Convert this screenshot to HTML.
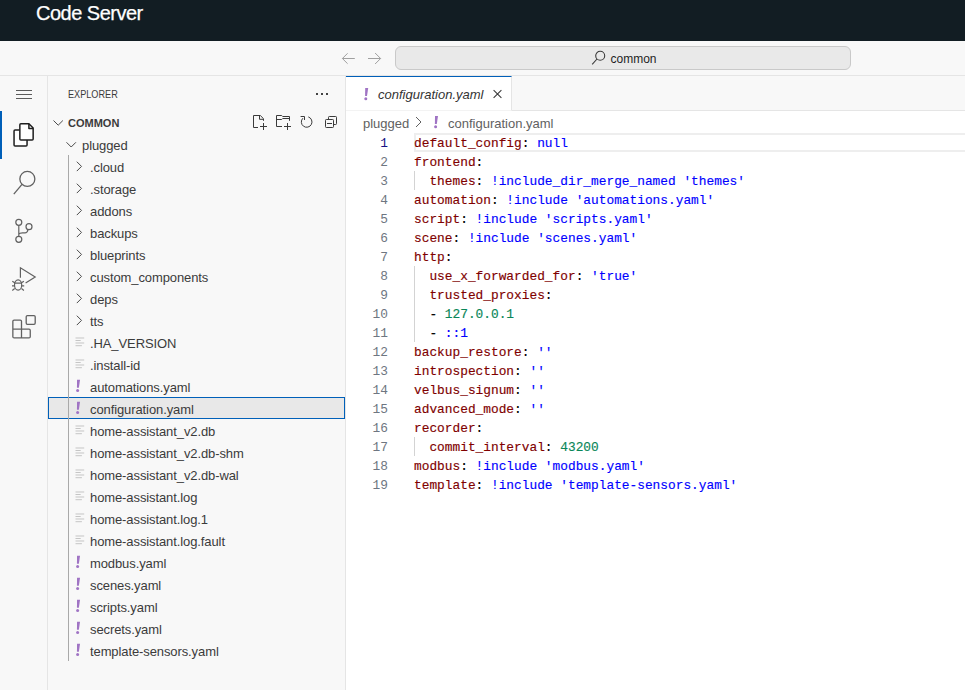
<!DOCTYPE html>
<html><head><meta charset="utf-8">
<style>
*{margin:0;padding:0;box-sizing:border-box}
html,body{width:965px;height:690px;overflow:hidden;background:#ffffff;font-family:"Liberation Sans",sans-serif}
.a{position:absolute}
#hdr{left:0;top:0;width:965px;height:41px;background:#121d23}
#hdr .t{position:absolute;left:36px;top:1px;font-size:20px;letter-spacing:-0.5px;line-height:24px;color:#ffffff;white-space:pre;-webkit-text-stroke:0.25px #ffffff}
#tb{left:0;top:41px;width:965px;height:35px;background:#f8f8f8;border-bottom:1px solid #e5e5e5}
#srch{left:395px;top:46px;width:456px;height:24px;background:#e9e9e9;border:1px solid #c9c9c9;border-radius:6px}
#srch .q{position:absolute;left:214.5px;top:5px;font-size:12px;line-height:14px;color:#1f1f1f}
#act{left:0;top:76px;width:48px;height:614px;background:#f8f8f8;border-right:1px solid #e5e5e5}
#side{left:48px;top:76px;width:298px;height:614px;background:#f8f8f8;border-right:1px solid #e5e5e5}
.row{position:absolute;left:48px;width:297px;height:22px;font-size:13px;line-height:22px;color:#3b3b3b;white-space:pre;letter-spacing:-0.1px}
.row .nm{position:absolute;left:42px;top:0}
.sel{background:#e8e8e8;border:1px solid #0060b9;left:48px;width:297px}
#tabs{left:346px;top:76px;width:619px;height:35px;background:#f8f8f8;border-bottom:1px solid #e5e5e5}
#tab{left:346px;top:76px;width:166px;height:35px;background:#ffffff;border-top:1px solid #005fb8;border-right:1px solid #e5e5e5;border-bottom:1px solid #f3f3f3}
.code{position:absolute;left:414px;font-family:"Liberation Mono",monospace;font-size:13.5px;line-height:19px;height:19px;white-space:pre;color:#800000;transform:scaleX(0.9501);transform-origin:0 0;-webkit-text-stroke:0.15px currentColor}
.ln{position:absolute;left:346px;width:42px;text-align:right;font-family:"Liberation Mono",monospace;font-size:13.5px;line-height:19px;color:#237893;transform:scaleX(0.9501);transform-origin:100% 0}
.k{color:#800000}.s{color:#0000ff}.num{color:#098658}.p{color:#000000}
.bang{position:absolute;color:#a074c4;font-weight:bold;font-style:italic;font-size:15px;line-height:22px}
.ig{position:absolute;width:1px;background:#d3d3d3}
svg{position:absolute;overflow:visible}
</style></head><body>
<div id="hdr" class="a"><div class="t">Code Server</div></div>
<div id="tb" class="a"></div>
<svg style="left:340px;top:50px" width="44" height="16" viewBox="0 0 44 16"><g fill="none" stroke="#a0a0a0" stroke-width="1"><path d="M2.4 8.5H14.8M2.4 8.5L7.6 3.3M2.4 8.5L7.6 13.7"/><path d="M28 8.5H40.6M40.6 8.5L35.1 3M40.6 8.5L35.1 14"/></g></svg>
<div id="srch" class="a"><div class="q">common</div></div>
<svg style="left:591px;top:50px" width="16" height="16" viewBox="0 0 16 16"><g fill="none" stroke="#3b3b3b" stroke-width="1.1"><circle cx="9.2" cy="5.8" r="4.5"/><path d="M6 9L1.2 14.4"/></g></svg>
<div id="act" class="a"></div>
<div class="a" style="left:0;top:111px;width:2px;height:48px;background:#005fb8"></div>
<svg style="left:0;top:0" width="48" height="350" viewBox="0 0 48 350"><g fill="#5c5c5c"><rect x="16" y="90" width="16" height="1"/><rect x="16" y="94" width="16" height="1"/><rect x="16" y="98" width="16" height="1"/></g><g fill="none" stroke="#1f1f1f" stroke-width="1.5" stroke-linejoin="round"><path d="M19.85 130.1 H15.05 Q14.05 130.1 14.05 131.1 V145 Q14.05 146 15.05 146 H26.05 Q27.05 146 27.05 145 V140" fill="#ffffff"/><path d="M19.85 124.75 Q19.85 123.75 20.85 123.75 L28.9 123.75 L33.15 128 L33.15 139.1 Q33.15 140.1 32.15 140.1 L20.85 140.1 Q19.85 140.1 19.85 139.1 Z" fill="#ffffff"/><path d="M28.9 123.75 V128.5 H33.15"/></g><g fill="none" stroke="#616161" stroke-width="1.3"><circle cx="27.35" cy="178.9" r="7.5"/><path d="M22 184.3L13.8 194.2"/></g><g fill="none" stroke="#616161" stroke-width="1.2"><circle cx="18.8" cy="222.3" r="3"/><circle cx="18.8" cy="239.3" r="3"/><circle cx="29" cy="226.7" r="3"/><path d="M18.8 225.3V236.3M18.8 234.2Q19.5 232.9 22.5 232.9H25Q27.3 232.9 28 229.6"/></g><g fill="none" stroke="#616161" stroke-width="1.2" stroke-linejoin="miter"><path d="M20.4 277.8V267.8L35.2 277.1L25.6 283"/><ellipse cx="18.1" cy="285" rx="3.6" ry="5.2"/><path d="M14.5 283.2H21.7M12.3 281.2L14.7 282.8M23.9 281.2L21.5 282.8M12 285.8H14.5M24.2 285.8H21.7M12.3 290.4L14.7 288.6M23.9 290.4L21.5 288.6"/></g><g fill="none" stroke="#616161" stroke-width="1.3"><rect x="26.2" y="315.6" width="9" height="8.7" rx="1.2"/><path d="M21.5 329.2V321.2Q21.5 320.05 20.3 320.05H14.1Q12.85 320.05 12.85 321.2V336.8Q12.85 337.95 14.1 337.95H29Q30.25 337.95 30.25 336.8V330.4Q30.25 329.2 29 329.2H12.85M21.5 329.2V337.95"/></g></svg>
<div id="side" class="a"></div>
<div class="a" style="left:68px;top:84px;font-size:11px;line-height:20px;color:#3b3b3b;transform:scaleX(0.83);transform-origin:0 0;white-space:pre">EXPLORER</div>
<svg style="left:0;top:0" width="346" height="140" viewBox="0 0 346 140"><g fill="#424242"><rect x="316" y="93" width="2" height="2"/><rect x="321" y="93" width="2" height="2"/><rect x="326" y="93" width="2" height="2"/></g><g fill="none" stroke="#3b3b3b" stroke-width="1"><path d="M258 127.5H253.5V115.5H260.3L263.5 118.7V120.8M259.5 115.5V119.3H263.5M260 126.5H267M263.5 123V130"/><path d="M282 126.5H276.5V115.5H281.7L282.7 116.5H289.5V120.8M276.5 119.5H281.7L282.7 118.5H289.5M284 126.5H291M287.5 123V130"/><path d="M308.3 116.9A5.3 5.3 0 1 1 302.9 118.2"/><path d="M300.6 116.5H304.5V120"/><path d="M328.5 119.3V117.3Q328.5 116.5 329.3 116.5H335.7Q336.5 116.5 336.5 117.3V123.7Q336.5 124.5 335.7 124.5H333.7"/><rect x="325.5" y="119.5" width="8" height="8" rx="0.8"/><path d="M327 123.5H332"/></g><path d="M53.5 120.5L58.2 125.2L62.9 120.5" fill="none" stroke="#4a4a4a" stroke-width="1"/></svg>
<div class="a" style="left:68px;top:112px;font-size:11px;line-height:22px;font-weight:bold;color:#3b3b3b;white-space:pre">COMMON</div>
<div class="row" style="top:134px"><div class="nm" style="left:34px;top:1px">plugged</div></div>
<svg style="left:0;top:0" width="10" height="10"><path d="M66.5 142.3L71.2 147L75.9 142.3" fill="none" stroke="#4a4a4a" stroke-width="1"/></svg>
<div class="row" style="top:155px"><div class="nm" style="top:2px;left:42px">.cloud</div></div>
<svg style="left:0;top:0" width="10" height="10"><path d="M76.8 161.7L81.5 166.4L76.8 171.1" fill="none" stroke="#4a4a4a" stroke-width="1"/></svg>
<div class="row" style="top:177px"><div class="nm" style="top:2px;left:42px">.storage</div></div>
<svg style="left:0;top:0" width="10" height="10"><path d="M76.8 183.7L81.5 188.4L76.8 193.1" fill="none" stroke="#4a4a4a" stroke-width="1"/></svg>
<div class="row" style="top:199px"><div class="nm" style="top:2px;left:42px">addons</div></div>
<svg style="left:0;top:0" width="10" height="10"><path d="M76.8 205.7L81.5 210.4L76.8 215.1" fill="none" stroke="#4a4a4a" stroke-width="1"/></svg>
<div class="row" style="top:221px"><div class="nm" style="top:2px;left:42px">backups</div></div>
<svg style="left:0;top:0" width="10" height="10"><path d="M76.8 227.7L81.5 232.4L76.8 237.1" fill="none" stroke="#4a4a4a" stroke-width="1"/></svg>
<div class="row" style="top:243px"><div class="nm" style="top:2px;left:42px">blueprints</div></div>
<svg style="left:0;top:0" width="10" height="10"><path d="M76.8 249.7L81.5 254.4L76.8 259.1" fill="none" stroke="#4a4a4a" stroke-width="1"/></svg>
<div class="row" style="top:265px"><div class="nm" style="top:2px;left:42px">custom_components</div></div>
<svg style="left:0;top:0" width="10" height="10"><path d="M76.8 271.7L81.5 276.4L76.8 281.1" fill="none" stroke="#4a4a4a" stroke-width="1"/></svg>
<div class="row" style="top:287px"><div class="nm" style="top:2px;left:42px">deps</div></div>
<svg style="left:0;top:0" width="10" height="10"><path d="M76.8 293.7L81.5 298.4L76.8 303.1" fill="none" stroke="#4a4a4a" stroke-width="1"/></svg>
<div class="row" style="top:309px"><div class="nm" style="top:2px;left:42px">tts</div></div>
<svg style="left:0;top:0" width="10" height="10"><path d="M76.8 315.7L81.5 320.4L76.8 325.1" fill="none" stroke="#4a4a4a" stroke-width="1"/></svg>
<div class="row" style="top:331px"><div class="nm" style="top:2px;left:42px">.HA_VERSION</div></div>
<svg style="left:0;top:0" width="10" height="10"><g stroke="#c5c5c5" stroke-width="1"><path d="M75.5 338H84.2M75.5 340.5H80.7M75.5 343H84.2M75.5 345.7H81.9"/></g></svg>
<div class="row" style="top:353px"><div class="nm" style="top:2px;left:42px">.install-id</div></div>
<svg style="left:0;top:0" width="10" height="10"><g stroke="#c5c5c5" stroke-width="1"><path d="M75.5 360H84.2M75.5 362.5H80.7M75.5 365H84.2M75.5 367.7H81.9"/></g></svg>
<div class="row" style="top:375px"><div class="nm" style="top:2px;left:42px">automations.yaml</div></div>
<svg style="left:0;top:0" width="1" height="1"><g fill="#a074c4"><path d="M77.05 379.80H80.05L78.85 387.80H76.95Z"/><circle cx="77.65" cy="390.50" r="1.5"/></g></svg>
<div class="row sel" style="top:397px"><div class="nm" style="top:1px;left:41px">configuration.yaml</div></div>
<svg style="left:0;top:0" width="1" height="1"><g fill="#a074c4"><path d="M77.05 401.80H80.05L78.85 409.80H76.95Z"/><circle cx="77.65" cy="412.50" r="1.5"/></g></svg>
<div class="row" style="top:419px"><div class="nm" style="top:2px;left:42px">home-assistant_v2.db</div></div>
<svg style="left:0;top:0" width="10" height="10"><g stroke="#c5c5c5" stroke-width="1"><path d="M75.5 426H84.2M75.5 428.5H80.7M75.5 431H84.2M75.5 433.7H81.9"/></g></svg>
<div class="row" style="top:441px"><div class="nm" style="top:2px;left:42px">home-assistant_v2.db-shm</div></div>
<svg style="left:0;top:0" width="10" height="10"><g stroke="#c5c5c5" stroke-width="1"><path d="M75.5 448H84.2M75.5 450.5H80.7M75.5 453H84.2M75.5 455.7H81.9"/></g></svg>
<div class="row" style="top:463px"><div class="nm" style="top:2px;left:42px">home-assistant_v2.db-wal</div></div>
<svg style="left:0;top:0" width="10" height="10"><g stroke="#c5c5c5" stroke-width="1"><path d="M75.5 470H84.2M75.5 472.5H80.7M75.5 475H84.2M75.5 477.7H81.9"/></g></svg>
<div class="row" style="top:485px"><div class="nm" style="top:2px;left:42px">home-assistant.log</div></div>
<svg style="left:0;top:0" width="10" height="10"><g stroke="#c5c5c5" stroke-width="1"><path d="M75.5 492H84.2M75.5 494.5H80.7M75.5 497H84.2M75.5 499.7H81.9"/></g></svg>
<div class="row" style="top:507px"><div class="nm" style="top:2px;left:42px">home-assistant.log.1</div></div>
<svg style="left:0;top:0" width="10" height="10"><g stroke="#c5c5c5" stroke-width="1"><path d="M75.5 514H84.2M75.5 516.5H80.7M75.5 519H84.2M75.5 521.7H81.9"/></g></svg>
<div class="row" style="top:529px"><div class="nm" style="top:2px;left:42px">home-assistant.log.fault</div></div>
<svg style="left:0;top:0" width="10" height="10"><g stroke="#c5c5c5" stroke-width="1"><path d="M75.5 536H84.2M75.5 538.5H80.7M75.5 541H84.2M75.5 543.7H81.9"/></g></svg>
<div class="row" style="top:551px"><div class="nm" style="top:2px;left:42px">modbus.yaml</div></div>
<svg style="left:0;top:0" width="1" height="1"><g fill="#a074c4"><path d="M77.05 555.80H80.05L78.85 563.80H76.95Z"/><circle cx="77.65" cy="566.50" r="1.5"/></g></svg>
<div class="row" style="top:573px"><div class="nm" style="top:2px;left:42px">scenes.yaml</div></div>
<svg style="left:0;top:0" width="1" height="1"><g fill="#a074c4"><path d="M77.05 577.80H80.05L78.85 585.80H76.95Z"/><circle cx="77.65" cy="588.50" r="1.5"/></g></svg>
<div class="row" style="top:595px"><div class="nm" style="top:2px;left:42px">scripts.yaml</div></div>
<svg style="left:0;top:0" width="1" height="1"><g fill="#a074c4"><path d="M77.05 599.80H80.05L78.85 607.80H76.95Z"/><circle cx="77.65" cy="610.50" r="1.5"/></g></svg>
<div class="row" style="top:617px"><div class="nm" style="top:2px;left:42px">secrets.yaml</div></div>
<svg style="left:0;top:0" width="1" height="1"><g fill="#a074c4"><path d="M77.05 621.80H80.05L78.85 629.80H76.95Z"/><circle cx="77.65" cy="632.50" r="1.5"/></g></svg>
<div class="row" style="top:639px"><div class="nm" style="top:2px;left:42px">template-sensors.yaml</div></div>
<svg style="left:0;top:0" width="1" height="1"><g fill="#a074c4"><path d="M77.05 643.80H80.05L78.85 651.80H76.95Z"/><circle cx="77.65" cy="654.50" r="1.5"/></g></svg>
<div class="a" style="left:68px;top:155px;width:1px;height:506px;background:#a9a9a9"></div>
<div id="tabs" class="a"></div>
<div id="tab" class="a"></div>
<svg style="left:0;top:0" width="1" height="1"><g fill="#a074c4"><path d="M365.20 88.00H368.20L367.00 96.00H365.10Z"/><circle cx="365.80" cy="98.70" r="1.5"/></g></svg>
<div class="a" style="left:378px;top:85px;font-size:13px;line-height:20px;font-style:italic;color:#333333;white-space:pre">configuration.yaml</div>
<svg style="left:0;top:0" width="10" height="10"><path d="M493.6 90.2L501.4 97.8M501.4 90.2L493.6 97.8" fill="none" stroke="#3b3b3b" stroke-width="1.1"/></svg>
<div class="a" style="left:363px;top:114px;font-size:13px;line-height:20px;color:#616161;white-space:pre">plugged</div>
<svg style="left:0;top:0" width="10" height="10"><path d="M416 117L421 122L416 127" fill="none" stroke="#616161" stroke-width="1"/></svg>
<svg style="left:0;top:0" width="1" height="1"><g fill="#a074c4"><path d="M435.00 116.00H438.00L436.80 124.00H434.90Z"/><circle cx="435.60" cy="126.70" r="1.5"/></g></svg>
<div class="a" style="left:448px;top:114px;font-size:13px;line-height:20px;color:#616161;white-space:pre">configuration.yaml</div>
<div class="a" style="left:414px;top:133px;width:551px;height:19px;border:2px solid #eeeeee;border-right:none"></div>
<div class="ln" style="top:134px;color:#171184">1</div>
<div class="code" style="top:134px"><span class="k">default_config</span><span class="p">: </span><span class="s">null</span></div>
<div class="ln" style="top:153px;color:#6e7681">2</div>
<div class="code" style="top:153px"><span class="k">frontend</span><span class="p">:</span></div>
<div class="ln" style="top:172px;color:#6e7681">3</div>
<div class="code" style="top:172px">  <span class="k">themes</span><span class="p">: </span><span class="s">!include_dir_merge_named 'themes'</span></div>
<div class="ln" style="top:191px;color:#6e7681">4</div>
<div class="code" style="top:191px"><span class="k">automation</span><span class="p">: </span><span class="s">!include 'automations.yaml'</span></div>
<div class="ln" style="top:210px;color:#6e7681">5</div>
<div class="code" style="top:210px"><span class="k">script</span><span class="p">: </span><span class="s">!include 'scripts.yaml'</span></div>
<div class="ln" style="top:229px;color:#6e7681">6</div>
<div class="code" style="top:229px"><span class="k">scene</span><span class="p">: </span><span class="s">!include 'scenes.yaml'</span></div>
<div class="ln" style="top:248px;color:#6e7681">7</div>
<div class="code" style="top:248px"><span class="k">http</span><span class="p">:</span></div>
<div class="ln" style="top:267px;color:#6e7681">8</div>
<div class="code" style="top:267px">  <span class="k">use_x_forwarded_for</span><span class="p">: </span><span class="s">'true'</span></div>
<div class="ln" style="top:286px;color:#6e7681">9</div>
<div class="code" style="top:286px">  <span class="k">trusted_proxies</span><span class="p">:</span></div>
<div class="ln" style="top:305px;color:#6e7681">10</div>
<div class="code" style="top:305px">  <span class="p">- </span><span class="num">127.0.0.1</span></div>
<div class="ln" style="top:324px;color:#6e7681">11</div>
<div class="code" style="top:324px">  <span class="p">- </span><span class="s">::1</span></div>
<div class="ln" style="top:343px;color:#6e7681">12</div>
<div class="code" style="top:343px"><span class="k">backup_restore</span><span class="p">: </span><span class="s">''</span></div>
<div class="ln" style="top:362px;color:#6e7681">13</div>
<div class="code" style="top:362px"><span class="k">introspection</span><span class="p">: </span><span class="s">''</span></div>
<div class="ln" style="top:381px;color:#6e7681">14</div>
<div class="code" style="top:381px"><span class="k">velbus_signum</span><span class="p">: </span><span class="s">''</span></div>
<div class="ln" style="top:400px;color:#6e7681">15</div>
<div class="code" style="top:400px"><span class="k">advanced_mode</span><span class="p">: </span><span class="s">''</span></div>
<div class="ln" style="top:419px;color:#6e7681">16</div>
<div class="code" style="top:419px"><span class="k">recorder</span><span class="p">:</span></div>
<div class="ln" style="top:438px;color:#6e7681">17</div>
<div class="code" style="top:438px">  <span class="k">commit_interval</span><span class="p">: </span><span class="num">43200</span></div>
<div class="ln" style="top:457px;color:#6e7681">18</div>
<div class="code" style="top:457px"><span class="k">modbus</span><span class="p">: </span><span class="s">!include 'modbus.yaml'</span></div>
<div class="ln" style="top:476px;color:#6e7681">19</div>
<div class="code" style="top:476px"><span class="k">template</span><span class="p">: </span><span class="s">!include 'template-sensors.yaml'</span></div>
<div class="a" style="left:414px;top:171px;width:1px;height:19px;background:#d3d3d3"></div>
<div class="a" style="left:414px;top:266px;width:1px;height:76px;background:#d3d3d3"></div>
<div class="a" style="left:414px;top:437px;width:1px;height:19px;background:#d3d3d3"></div>
</body></html>
